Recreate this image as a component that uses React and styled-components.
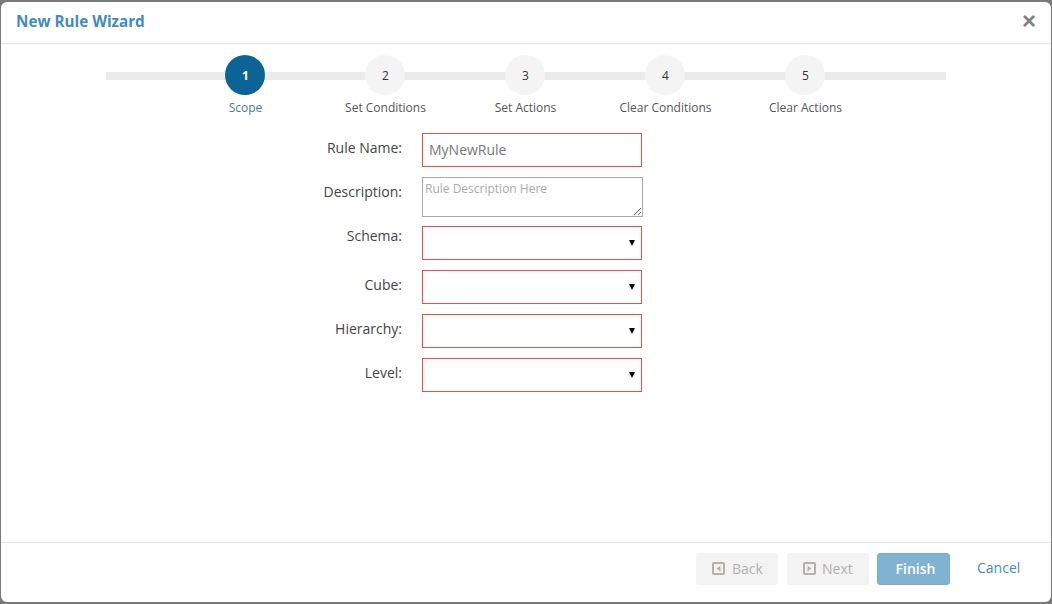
import React from 'react'
import styled, { createGlobalStyle } from 'styled-components';

const GlobalStyle = createGlobalStyle`
    html, body {
        margin: 0;
        height: 100%;
        background: #7a7a7a;
    }
    body {
        font-family: "Open Sans", "Liberation Sans", sans-serif;
        overflow: hidden;
    }
`;

const Modal = styled.div`
    box-sizing: border-box;
    width: 1050px;
    height: 600px;
    margin: 2px 1px;
    background: #FFF;
    border-radius: 6px;
    display: flex;
    flex-direction: column;
`;

const Header = styled.div`
    box-sizing: border-box;
    height: 42px;
    flex: none;
    border-bottom: 1px solid #e5e5e5;
    display: flex;
    align-items: center;
    justify-content: space-between;
    padding: 0 15px 3px;
`;

const Title = styled.h4`
    margin: 0;
    font-size: 15.25px;
    font-weight: 700;
    color: #428bbf;
`;

const Close = styled.span`
    font-family: "Liberation Sans", sans-serif;
    font-size: 24px;
    line-height: 1;
    font-weight: 700;
    color: #808080;
    margin-top: -1px;
`;

const Stepper = styled.div`
    box-sizing: border-box;
    width: 840px;
    margin: 11px auto 0;
    padding-right: 2px;
    display: flex;
    justify-content: center;
    background: linear-gradient(#ebebeb, #ebebeb) no-repeat 0 17px / 100% 8px;
`;

const Step = styled.div`
    width: 140px;
    display: flex;
    flex-direction: column;
    align-items: center;
`;

const Circle = styled.div`
    box-sizing: border-box;
    width: 40px;
    height: 40px;
    padding-left: 1px;
    border-radius: 50%;
    display: flex;
    align-items: center;
    justify-content: center;
    font-size: 12px;
    font-weight: ${props => props.active ? 700 : 400};
    color: ${props => props.active ? '#FFF' : '#333'};
    background: ${props => props.active ? '#0c6496' : '#f4f4f4'};
`;

const StepLabel = styled.div`
    margin-top: 4px;
    padding-left: 1px;
    font-size: 12px;
    line-height: 17px;
    white-space: nowrap;
    color: ${props => props.active ? '#4a7ba0' : '#555'};
`;

const Form = styled.div`
    flex: 1;
    margin-top: 17px;
    display: grid;
    grid-template-columns: 401px 221px;
    column-gap: 20px;
    grid-auto-rows: min-content;
    align-items: start;
`;

const Label = styled.label`
    justify-self: end;
    font-size: 14px;
    line-height: 20px;
    color: #444;
    padding-top: ${props => props.offset}px;
`;

const Input = styled.input`
    box-sizing: border-box;
    width: 220px;
    height: 34px;
    margin-bottom: 10px;
    padding: 0 6px 2px;
    border: 1px solid #f24b4b;
    outline: none;
    font: 14px "Open Sans", sans-serif;
    color: #777;
`;

const TextArea = styled.textarea`
    display: block;
    box-sizing: border-box;
    width: 221px;
    height: 40px;
    margin-bottom: 9px;
    padding: 2px;
    border: 1px solid #a9a9a9;
    outline: none;
    font: 12px "Open Sans", sans-serif;
    &::placeholder {
        color: #aaa;
    }
`;

const SelectWrap = styled.div`
    position: relative;
    width: 220px;
    height: 34px;
    margin-bottom: 10px;
    &::after {
        content: "";
        position: absolute;
        right: 7px;
        top: 14px;
        border-left: 3px solid transparent;
        border-right: 3px solid transparent;
        border-top: 6px solid #000;
    }
`;

const Select = styled.select`
    appearance: none;
    display: block;
    box-sizing: border-box;
    width: 100%;
    height: 100%;
    border: 1px solid #f24b4b;
    border-radius: 0;
    outline: none;
    background: #FFF;
`;

const Footer = styled.div`
    box-sizing: border-box;
    height: 60px;
    flex: none;
    border-top: 1px solid #e5e5e5;
    display: flex;
    align-items: flex-start;
    padding-top: 10px;
    padding-left: 695px;
`;

const NavButton = styled.button`
    box-sizing: border-box;
    width: 82px;
    height: 32px;
    margin-right: 9px;
    border: none;
    border-radius: 3px;
    background: #f3f3f3;
    color: #b0b0b0;
    font: 14px "Open Sans", sans-serif;
    display: flex;
    align-items: center;
    gap: ${props => props.gap}px;
    padding: 0 0 2px 16px;
`;

const FinishButton = styled.button`
    box-sizing: border-box;
    width: 73px;
    height: 32px;
    margin-left: -1px;
    border: 1px solid #7aaecd;
    border-radius: 3px;
    background: #80b3d2;
    color: #FFF;
    font: 600 14px "Open Sans", sans-serif;
    padding: 0 0 2px 4px;
`;

const Cancel = styled.a`
    margin-left: 27px;
    font-size: 14px;
    line-height: 30px;
    color: #428bca;
`;

const NavIcon = ({ dir }) => (
    <svg width="13" height="13" viewBox="0 0 13 13">
        <rect x="1" y="1" width="11" height="11" rx="1" fill="none" stroke="#b8b0aa" strokeWidth="2" />
        <path d={dir === 'left' ? 'M8.5 3.5v6l-4-3z' : 'M4.5 3.5v6l4-3z'} fill="#b8b0aa" />
    </svg>
);

const steps = ['Scope', 'Set Conditions', 'Set Actions', 'Clear Conditions', 'Clear Actions'];
const selects = ['Schema:', 'Cube:', 'Hierarchy:', 'Level:'];

export default function App() {
    return (
        <Modal>
            <GlobalStyle />
            <Header>
                <Title>New Rule Wizard</Title>
                <Close>×</Close>
            </Header>
            <Stepper>
                {steps.map((name, i) => (
                    <Step key={name}>
                        <Circle active={i === 0}>{i + 1}</Circle>
                        <StepLabel active={i === 0}>{name}</StepLabel>
                    </Step>
                ))}
            </Stepper>
            <Form>
                <Label offset={5}>Rule Name:</Label>
                <Input defaultValue="MyNewRule" />
                <Label offset={5}>Description:</Label>
                <TextArea placeholder="Rule Description Here" />
                {selects.map((name, i) => (
                    <React.Fragment key={name}>
                        <Label offset={i === 0 ? 0 : 5}>{name}</Label>
                        <SelectWrap><Select /></SelectWrap>
                    </React.Fragment>
                ))}
            </Form>
            <Footer>
                <NavButton gap={7}><NavIcon dir="left" />Back</NavButton>
                <NavButton gap={6}><NavIcon dir="right" />Next</NavButton>
                <FinishButton>Finish</FinishButton>
                <Cancel>Cancel</Cancel>
            </Footer>
        </Modal>
    )
}
